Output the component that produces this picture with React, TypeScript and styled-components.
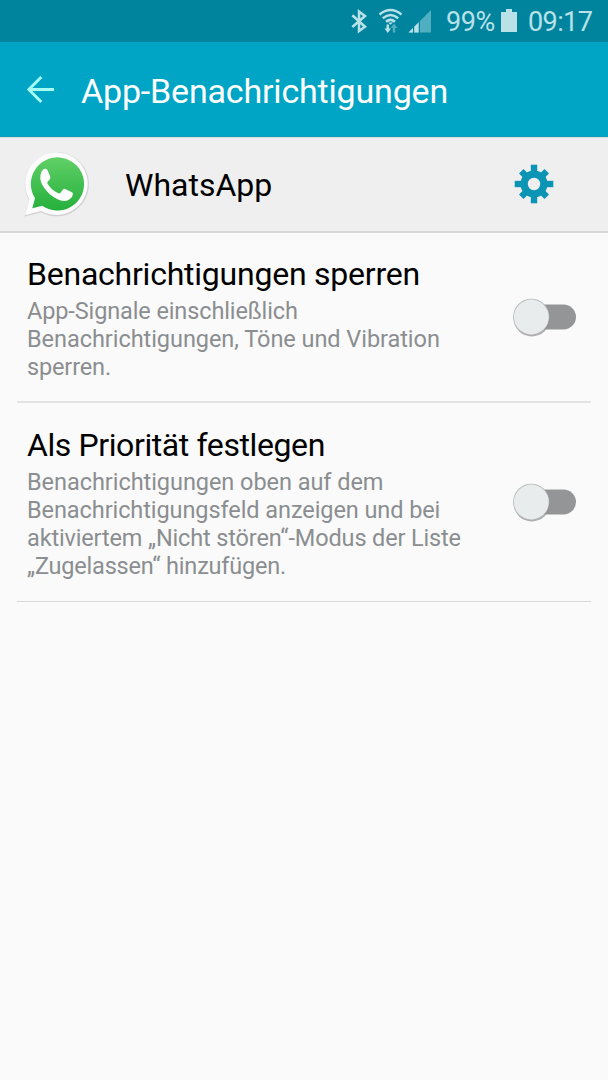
import React from "react";
import styled, { createGlobalStyle } from "styled-components";

const GlobalStyle = createGlobalStyle`
  * { box-sizing: border-box; }
  body { margin: 0; background: #fafafa; font-family: Roboto, "Liberation Sans", sans-serif; }
`;

const Screen = styled.div`
  display: flex;
  flex-direction: column;
  width: 608px;
  height: 1080px;
  overflow: hidden;
  background: #fafafa;
`;

const StatusBar = styled.div`
  display: flex;
  align-items: center;
  justify-content: flex-end;
  height: 42px;
  flex: none;
  padding-right: 16px;
  background: #00849e;
  color: #b9e1e8;
`;

const StatusIcons = styled.svg`
  display: block;
  width: 84px;
  height: 42px;
  margin-right: 12px;
`;

const StatusText = styled.span<{ $width: number; $spacing: number }>`
  width: ${(p) => p.$width}px;
  font-size: 27px;
  font-weight: 400;
  line-height: 42px;
  padding-top: 2px;
  white-space: nowrap;
  letter-spacing: ${(p) => p.$spacing}px;
`;

const Battery = styled.svg`
  display: block;
  width: 16px;
  height: 42px;
  margin: 0 11px 0 6px;
`;

const Header = styled.header`
  display: flex;
  align-items: center;
  height: 95px;
  flex: none;
  padding-left: 27px;
  background: #00a5c6;
  border-bottom: 1px solid #0c9dba;
`;

const BackArrow = styled.svg`
  display: block;
  width: 28px;
  height: 28px;
  margin-right: 26px;
`;

const Title = styled.h1`
  margin: 3px 0 0;
  font-size: 34px;
  font-weight: 400;
  line-height: 40px;
  color: #fff;
  white-space: nowrap;
  letter-spacing: -0.18px;
`;

const AppRow = styled.div`
  display: flex;
  align-items: center;
  height: 96px;
  flex: none;
  padding: 0 54px 2px 21px;
  background: #efefef;
  border-top: 1px solid #dcdfe0;
  border-bottom: 2px solid #d8d8d8;
`;

const AppIcon = styled.svg`
  display: block;
  width: 70px;
  height: 70px;
  margin-right: 34px;
`;

const AppName = styled.div`
  flex: 1;
  margin-top: 3px;
  font-size: 32px;
  line-height: 40px;
  color: #000;
`;

const Gear = styled.svg`
  display: block;
  width: 40px;
  height: 40px;
`;

const Setting = styled.section<{ $height: number; $line: string }>`
  display: flex;
  align-items: center;
  justify-content: space-between;
  flex: none;
  height: ${(p) => p.$height}px;
  margin: 0 17px;
  padding: 0 14px 0 10px;
  border-bottom: ${(p) => p.$line};
`;

const SettingText = styled.div<{ $top: number }>`
  align-self: flex-start;
  margin-top: ${(p) => p.$top}px;
`;

const SettingTitle = styled.h2<{ $spacing: number }>`
  margin: 0;
  font-size: 32px;
  font-weight: 400;
  line-height: 40px;
  color: #000;
  white-space: nowrap;
  letter-spacing: ${(p) => p.$spacing}px;
`;

const Description = styled.p`
  margin: 3px 0 0;
  font-size: 23.5px;
  line-height: 28px;
  color: #8b8e90;
`;

const Line = styled.span<{ $spacing: number }>`
  display: block;
  letter-spacing: ${(p) => p.$spacing}px;
`;

const Switch = styled.svg`
  display: block;
  flex: none;
  width: 70px;
  height: 48px;
`;

const Toggle = () => (
  <Switch viewBox="0 0 70 48">
    <rect x="26" y="11.5" width="43" height="25" rx="12.5" fill="#949596" />
    <circle cx="24.8" cy="25.3" r="18.2" fill="#8d8f90" opacity="0.7" />
    <circle cx="24.3" cy="23.8" r="18.1" fill="#b4b8b7" />
    <circle cx="24.3" cy="24" r="17.4" fill="#e9ecec" />
  </Switch>
);

export default function App() {
  return (
    <>
      <GlobalStyle />
      <Screen>
        <StatusBar>
          <StatusIcons viewBox="350 0 84 42">
            <path d="M352.300 15.300 L365 26.700 L359 31 V11.500 L365 16 L352.300 27" fill="none" stroke="#b9e1e8" strokeWidth="2.500" />
            <g fill="none" stroke="#b9e1e8" strokeWidth="2.500">
              <path d="M379.500 14.400 Q390.500 5.600 401.500 14.400" />
              <path d="M382.800 18.200 Q390.500 11.800 398.200 18.200" />
              <path d="M386 21.700 Q390.500 18 395 21.700" />
            </g>
            <path d="M388 22.500h5l-2.500 2.300z" fill="#b9e1e8" />
            <path d="M386.500 24.500h2.500v4h2L387.800 33l-3.300-4.500h2z" fill="#b9e1e8" />
            <path d="M392.800 32.500h2.400v-4.500h2.300L394 23.500l-3.300 4.500h2.100z" fill="#4fafc0" />
            <path d="M408.500 32.500 L431 10 V32.500z" fill="#4fafc0" />
            <path d="M408.500 32.500 L419 22 V32.500z" fill="#b9e1e8" />
            <path d="M413.600 27v6" stroke="#00849e" strokeWidth="1.200" />
            <path d="M419.300 21.500v11.500" stroke="#00849e" strokeWidth="1.200" />
          </StatusIcons>
          <StatusText $width={49} $spacing={-0.4}>99%</StatusText>
          <Battery viewBox="0 0 16 42">
            <path d="M0 12h5V9h6v3h5v20H0z" fill="#b9e1e8" />
          </Battery>
          <StatusText $width={64} $spacing={-0.6}>09:17</StatusText>
        </StatusBar>
        <Header>
          <BackArrow viewBox="0 0 28 28">
            <path d="M27 14.500H2M14.300 2L1.800 14.500l12.500 12.500" fill="none" stroke="#a5fff6" strokeWidth="2.900" />
          </BackArrow>
          <Title>App-Benachrichtigungen</Title>
        </Header>
        <AppRow>
          <AppIcon viewBox="22 149 70 70">
            <defs>
              <linearGradient id="bubble" x1="0" y1="0" x2="0" y2="1">
                <stop offset="0" stopColor="#61d066" />
                <stop offset="1" stopColor="#25b03c" />
              </linearGradient>
            </defs>
            <path d="M25.500 216.500 L30 200 A32 32 0 1 1 42.500 212.300z" fill="#b9b9b9" opacity="0.600" />
            <path d="M26 215.300 L30.300 199.300 A31.300 31.300 0 1 1 42.200 211z" fill="#fcfcfc" />
            <path d="M33.300 208.300 L36 198.200 A26.600 26.600 0 1 1 43.300 205.800z" fill="url(#bubble)" />
            <path d="M44.500 169.300c1.400-.7 3.200-.7 4 1l2.700 6.200c.4 1.100 0 2-.6 2.900l-1.900 2.400c-.5.700-.5 1.200-.1 1.900 2.600 4.300 6.200 7.600 10.800 9.600.8.300 1.300.2 1.900-.4l2.700-3.300c.6-.8 1.300-.9 2.200-.5l6.300 3c1.100.5 1.500 1 1.300 2.200-.5 4-4.500 6.800-8.500 6.700-6.500-.3-13-4.800-17.500-10-3.300-3.800-6.500-8.400-6.500-13.200 0-3.400 1-7.200 3.200-8.500z" fill="#fff" />
          </AppIcon>
          <AppName>WhatsApp</AppName>
          <Gear viewBox="-20 -20 40 40">
            <g fill="#0b94b3">
              {[0, 45, 90, 135].map((a) => (
                <rect key={a} x="-3.200" y={a % 90 ? -18 : -19.300} width="6.400" height={a % 90 ? 36 : 38.600} transform={`rotate(${a})`} />
              ))}
              <circle r="13.500" />
            </g>
            <circle r="6.200" fill="#efefef" />
          </Gear>
        </AppRow>
        <Setting $height={170} $line="2px solid #e3e3e3">
          <SettingText $top={21}>
            <SettingTitle $spacing={-0.23}>Benachrichtigungen sperren</SettingTitle>
            <Description>
              <Line $spacing={-0.12}>App-Signale einschließlich</Line>
              <Line $spacing={-0.05}>Benachrichtigungen, Töne und Vibration</Line>
              <Line $spacing={-0.15}>sperren.</Line>
            </Description>
          </SettingText>
          <Toggle />
        </Setting>
        <Setting $height={199} $line="1px solid #d9d9d9">
          <SettingText $top={22}>
            <SettingTitle $spacing={-0.4}>Als Priorität festlegen</SettingTitle>
            <Description>
              <Line $spacing={-0.05}>Benachrichtigungen oben auf dem</Line>
              <Line $spacing={-0.08}>Benachrichtigungsfeld anzeigen und bei</Line>
              <Line $spacing={-0.15}>aktiviertem „Nicht stören“-Modus der Liste</Line>
              <Line $spacing={-0.2}>„Zugelassen“ hinzufügen.</Line>
            </Description>
          </SettingText>
          <Toggle />
        </Setting>
      </Screen>
    </>
  );
}
